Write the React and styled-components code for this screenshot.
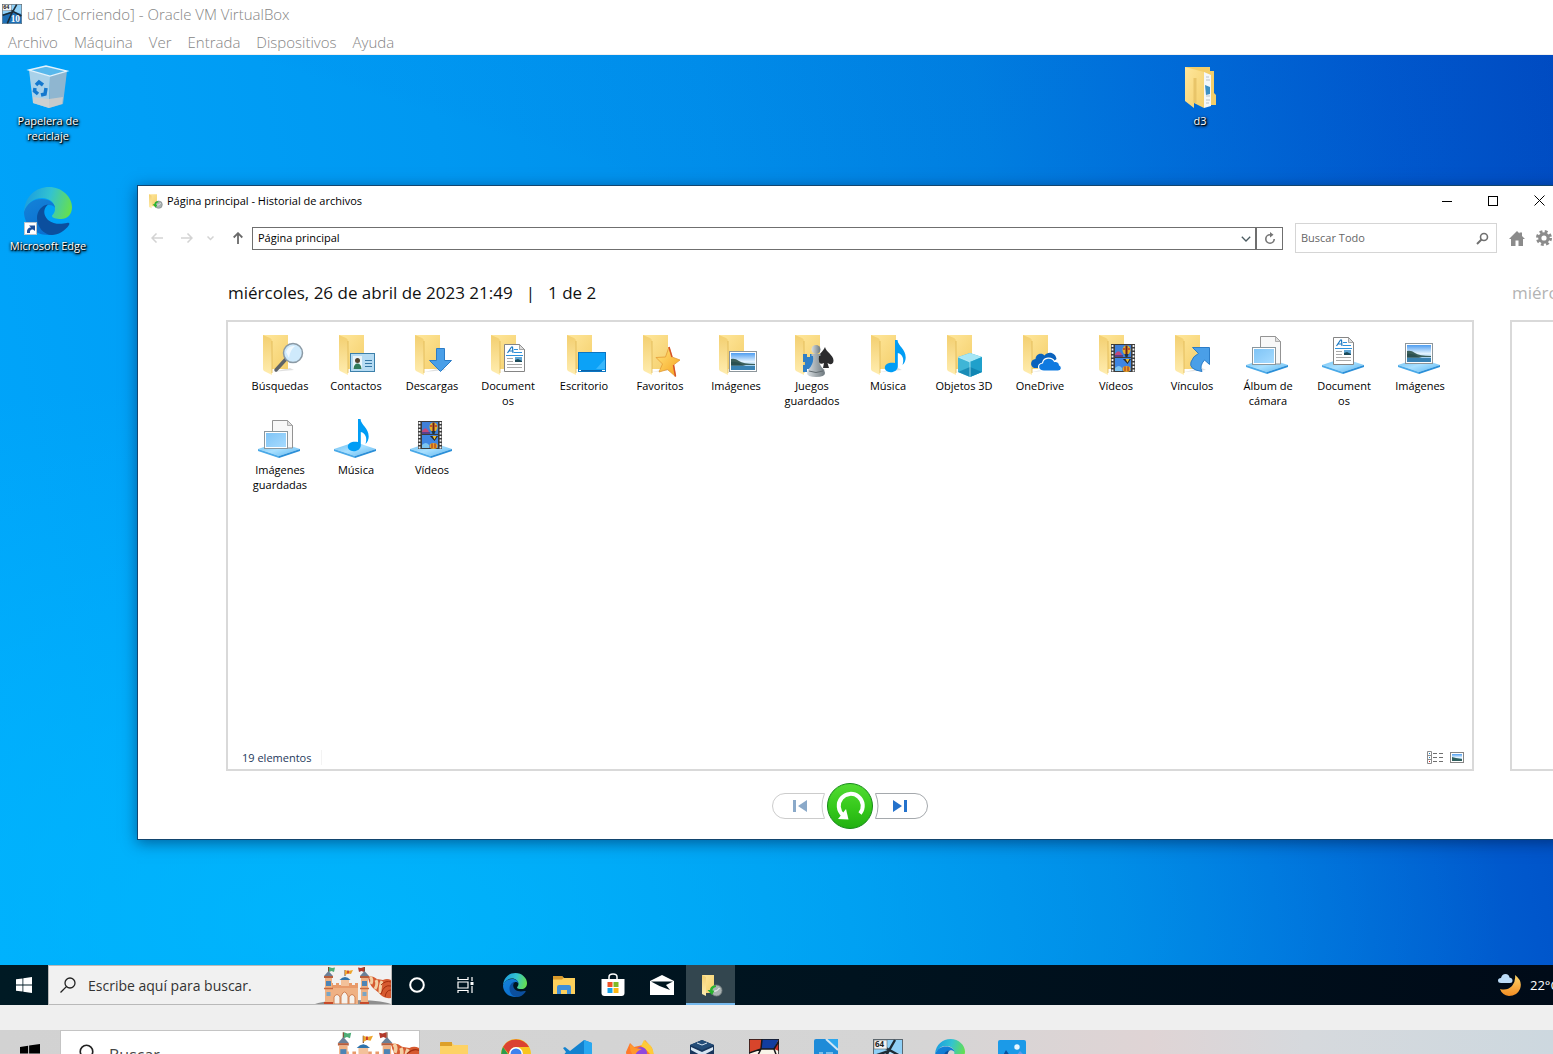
import styled, { createGlobalStyle, css } from "styled-components";

const GlobalStyle = createGlobalStyle`
  * { box-sizing: border-box; }
  body {
    margin: 0;
    overflow: hidden;
    background: #fff;
    font-family: "Open Sans", "Noto Sans", sans-serif;
  }
  button, input {
    font: inherit;
    color: inherit;
    border: 0;
    padding: 0;
    margin: 0;
    background: none;
    outline: none;
  }
  a { color: inherit; text-decoration: none; }
  svg { display: block; flex: none; }
`;

const Screen = styled.div`
  height: 100vh;
  display: flex;
  flex-direction: column;
  overflow: hidden;
`;

/* ---------- VirtualBox frame ---------- */

const HostTitle = styled.header`
  display: flex;
  align-items: center;
  gap: 5px;
  height: 30px;
  padding: 0 2px 2px;
  color: #858585;
  font-size: 15px;
  font-weight: 300;
`;

const HostMenu = styled.nav`
  display: flex;
  align-items: center;
  gap: 16px;
  height: 25px;
  padding: 0 8px;
  border-bottom: 1px solid #f0f0f0;
  color: #858585;
  font-size: 15px;
  font-weight: 300;
`;

const HostStatus = styled.div`
  height: 25px;
  flex: none;
  background: #efefef;
`;

const HostTaskbar = styled.footer`
  display: flex;
  height: 24px;
  flex: none;
  overflow: hidden;
  background: linear-gradient(90deg, #d2d2d2 0%, #d5d5d5 58%, #dfd4d5 74%, #d6d9dd 84%, #cdd8df 100%);
`;

const HostStart = styled.button`
  display: flex;
  flex: none;
  justify-content: center;
  width: 60px;
  padding-top: 14px;
`;

const HostSearch = styled.label`
  display: flex;
  flex: none;
  width: 360px;
  height: 48px;
  border: 1px solid #c4c4c4;
  background: #fff;
  padding-left: 13px;
`;

const HostSearchIcon = styled.span`
  padding-top: 13px;
`;

const HostInput = styled.input`
  flex: 1;
  min-width: 0;
  height: 48px;
  padding-left: 15px;
  font-size: 16px;
  color: #333;
  &::placeholder { color: #444; opacity: 1; }
`;

const HostApps = styled.div`
  display: flex;
  padding: 9px 0 0 3px;
`;

const HostApp = styled.button`
  display: flex;
  justify-content: center;
  align-items: flex-start;
  width: 62px;
`;

/* ---------- guest desktop ---------- */

const Desktop = styled.main`
  position: relative;
  flex: 1;
  min-height: 0;
  overflow: hidden;
  background:
    linear-gradient(197deg, rgba(0, 90, 210, 0.08) 0%, rgba(0, 120, 230, 0.04) 28%, transparent 29%),
    radial-gradient(ellipse 75% 60% at 22% 95%, rgba(0, 190, 255, 0.7), rgba(0, 180, 255, 0) 100%),
    linear-gradient(80deg, #00a6fb 0%, #0098f1 34%, #008eea 50%, #007fe0 66%, #0070da 75%, #0057cc 90%, #004ac0 100%);
`;

const Shortcut = styled.a`
  position: absolute;
  left: ${(p) => p.$left}px;
  top: ${(p) => p.$top}px;
  display: flex;
  flex-direction: column;
  align-items: center;
  gap: 1px;
  width: 96px;
  color: #fff;
  font-size: 11px;
  line-height: 15px;
  text-align: center;
  text-shadow: 1px 1px 1px #000, 0 1px 3px #000, 1px 1px 3px #000;
`;

const ShortcutText = styled.span`
  max-width: ${(p) => (p.$narrow ? 72 : 96)}px;
`;

const Window = styled.section`
  position: absolute;
  left: 137px;
  right: -10px;
  top: 130px;
  bottom: 125px;
  display: flex;
  flex-direction: column;
  border: 1px solid #12456f;
  background: #fff;
  color: #000;
  box-shadow: 0 3px 14px rgba(0, 20, 60, 0.5);
`;

const TitleBar = styled.div`
  display: flex;
  align-items: center;
  height: 29px;
  padding-left: 9px;
  font-size: 11px;
`;

const Caption = styled.div`
  flex: 1;
  padding-left: 4px;
`;

const CaptionButton = styled.button`
  display: grid;
  place-items: center;
  width: 46px;
  height: 29px;
`;

const Toolbar = styled.div`
  display: flex;
  align-items: center;
  height: 30px;
  margin-top: 8px;
  padding: 0 5px 0 4px;
  font-size: 11px;
`;

const NavButtons = styled.div`
  display: flex;
  flex: none;
  align-items: center;
  width: 110px;
`;

const IconButton = styled.button`
  display: grid;
  flex: none;
  place-items: center;
  width: ${(p) => p.$w}px;
  height: 23px;
`;

const UpButton = styled(IconButton)`
  margin-left: auto;
`;

const Address = styled.div`
  display: flex;
  flex: 1;
  height: 23px;
  border: 1px solid #6f6f6f;
`;

const AddressInput = styled.input`
  flex: 1;
  min-width: 0;
  padding: 0 0 1px 5px;
`;

const Refresh = styled.button`
  display: grid;
  place-items: center;
  width: 27px;
  border-left: 2px solid #6f6f6f;
`;

const SearchBox = styled.label`
  display: flex;
  align-items: center;
  width: 202px;
  height: 30px;
  margin: 0 6px 0 12px;
  padding: 0 7px 0 5px;
  border: 1px solid #d5d5d5;
`;

const SearchInput = styled.input`
  flex: 1;
  min-width: 0;
  padding-bottom: 1px;
  &::placeholder { color: #666; opacity: 1; }
`;

const Carousel = styled.div`
  display: flex;
  flex: 1;
  min-height: 0;
  gap: 36px;
  padding: 28px 88px 0;
`;

const Version = styled.article`
  display: flex;
  flex-direction: column;
  flex: 0 0 100%;
  min-width: 0;
`;

const VersionTitle = styled.h2`
  display: flex;
  gap: 13px;
  margin: 0 0 15px 2px;
  color: ${(p) => (p.$faded ? "#b3b3b3" : "#111")};
  font-size: 17px;
  font-weight: 400;
  line-height: 24px;
  white-space: nowrap;
`;

const Panel = styled.div`
  display: flex;
  flex-direction: column;
  flex: 1;
  min-height: 0;
  border: 2px solid #d9d9d9;
`;

const Items = styled.ul`
  display: grid;
  grid-template-columns: repeat(auto-fill, 76px);
  grid-auto-rows: 76px;
  row-gap: 8px;
  flex: 1;
  align-content: start;
  margin: 0;
  padding: 9px 10px 9px 14px;
  list-style: none;
`;

const Item = styled.li`
  display: flex;
  flex-direction: column;
  align-items: center;
  font-size: 11px;
  line-height: 15px;
  text-align: center;
`;

const ItemLabel = styled.span`
  width: 60px;
  margin-top: 1px;
  overflow-wrap: anywhere;
`;

const StatusRow = styled.div`
  display: flex;
  align-items: center;
  height: 24px;
  padding: 0 8px 0 14px;
  color: #1e395b;
  font-size: 11px;
`;

const Count = styled.span`
  margin-right: auto;
  padding-right: 10px;
  border-right: 1px solid #f3f3f3;
`;

const ViewButton = styled.button`
  margin-left: 7px;
`;

const Controls = styled.div`
  display: flex;
  justify-content: center;
  align-items: center;
  gap: 2px;
  padding: 12px 0 10px;
`;

/* ---------- guest taskbar ---------- */

const Taskbar = styled.footer`
  display: flex;
  height: 40px;
  flex: none;
  overflow: hidden;
  color: #fff;
  background: linear-gradient(90deg, #001a24, #00131f 55%, #000b18);
`;

const TaskButton = styled.button`
  display: grid;
  place-items: center;
  width: ${(p) => p.$w || 49}px;
  height: 40px;
  ${(p) =>
    p.$active &&
    css`
      background: #33464f;
      box-shadow: inset 0 -2px #76b9ed;
    `}
`;

const TaskSearch = styled.label`
  display: flex;
  align-items: center;
  width: 344px;
  border: 1px solid #b9b9b9;
  background: #f1f1f1;
  padding-left: 11px;
`;

const TaskInput = styled.input`
  flex: 1;
  min-width: 0;
  padding-left: 12px;
  font-size: 14px;
  color: #333;
  &::placeholder { color: #333; opacity: 1; }
`;

const Weather = styled.button`
  display: flex;
  align-items: center;
  gap: 8px;
  width: 55px;
  margin-left: auto;
  overflow: hidden;
  color: #fff;
  font-size: 13px;
  white-space: nowrap;
`;

/* ---------- drawings ---------- */

const Gradients = () => (
  <svg width="0" height="0" style={{ position: "absolute" }} aria-hidden="true">
    <defs>
      <linearGradient id="fold" x1="0" y1="0" x2="1" y2="1">
        <stop offset="0" stopColor="#ffe79c" />
        <stop offset="1" stopColor="#f4cf6c" />
      </linearGradient>
      <linearGradient id="flap" x1="0" y1="0" x2="0" y2="1">
        <stop offset="0" stopColor="#f3cf70" />
        <stop offset="1" stopColor="#ffedb0" />
      </linearGradient>
      <linearGradient id="sky" x1="0" y1="0" x2="0" y2="1">
        <stop offset="0" stopColor="#4e9df0" />
        <stop offset="0.5" stopColor="#e3f3ff" />
        <stop offset="1" stopColor="#5ea8dc" />
      </linearGradient>
      <linearGradient id="base" x1="0" y1="0" x2="1" y2="1">
        <stop offset="0" stopColor="#69bdf0" />
        <stop offset="0.5" stopColor="#a9e0ff" />
        <stop offset="1" stopColor="#5ab6f0" />
      </linearGradient>
      <linearGradient id="edgeTop" x1="0" y1="0.4" x2="1" y2="0.6">
        <stop offset="0" stopColor="#1a9de0" />
        <stop offset="0.5" stopColor="#33c3d0" />
        <stop offset="1" stopColor="#67e04c" />
      </linearGradient>
      <linearGradient id="edgeMid" x1="0" y1="0" x2="0.5" y2="1">
        <stop offset="0" stopColor="#1583d8" />
        <stop offset="1" stopColor="#0a6fd0" />
      </linearGradient>
      <linearGradient id="green" x1="0" y1="0" x2="0" y2="1">
        <stop offset="0" stopColor="#53dc33" />
        <stop offset="0.55" stopColor="#35c81b" />
        <stop offset="1" stopColor="#22b010" />
      </linearGradient>
      <linearGradient id="star" x1="0" y1="0" x2="1" y2="1">
        <stop offset="0" stopColor="#ffe680" />
        <stop offset="1" stopColor="#f7a21b" />
      </linearGradient>
      <linearGradient id="pawn" x1="0" y1="0" x2="1" y2="0">
        <stop offset="0" stopColor="#d9dfe2" />
        <stop offset="1" stopColor="#6c777d" />
      </linearGradient>
      <linearGradient id="moon" x1="0" y1="0" x2="0" y2="1">
        <stop offset="0" stopColor="#ffd76b" />
        <stop offset="1" stopColor="#f28c22" />
      </linearGradient>
      <linearGradient id="pane" x1="0" y1="0" x2="1" y2="1">
        <stop offset="0" stopColor="#7fc4f6" />
        <stop offset="1" stopColor="#a6dbff" />
      </linearGradient>
    </defs>
  </svg>
);

const FolderShape = () => (
  <>
    <path d="M16 41L38 39L34 37Z" fill="#000" opacity=".12" />
    <path d="M7 4H32V38H14Z" fill="url(#fold)" />
    <path d="M7 4L14 7Q16 8 16 10V44L8 40Q7 39 7 38Z" fill="url(#flap)" />
    <path d="M16 10V42" stroke="#e0b754" strokeWidth=".8" />
  </>
);

const Platform = () => (
  <>
    <path d="M2 34L23 27L44 34L23 41Z" fill="url(#base)" />
    <path d="M2 34L23 41V43L2 36Z" fill="#4aa9e8" />
    <path d="M44 34L23 41V43L44 36Z" fill="#2b8fd8" />
  </>
);

const NoteShape = () => (
  <path
    d="M31 9H33.500C34 15 41.700 18 41.700 26.500C41.700 29 40.500 32.500 38.500 34C40.500 28 38.500 23 33.800 22V35.500C33.800 39 30 41.500 26.500 41.300C23 41 20.700 39 20.800 36.500C21 33 25 31 31 32Z"
    fill="#009df5"
  />
);

const PhotoShape = () => (
  <>
    <rect x=".5" y=".5" width="27" height="20" fill="#fff" stroke="#8d969b" />
    <rect x="2" y="2" width="24" height="17" fill="url(#sky)" />
    <path d="M2 8Q6 7 10 10T26 13V14H2Z" fill="#3c5f5a" />
    <path d="M2 11Q8 10 14 14L20 16H2Z" fill="#234a4c" opacity=".7" />
    <path d="M2 15H26V19H2Z" fill="#3a83b4" />
  </>
);

const DocShape = () => (
  <>
    <path d="M.5 .5H15.500L20.500 5.500V27.500H.5Z" fill="#fff" stroke="#858585" />
    <path d="M15.500 .5V5.500H20.500Z" fill="#ddd" stroke="#858585" strokeWidth=".7" />
    <path d="M3.500 9L7.500 3H8.500L9 9M5 7H9" fill="none" stroke="#1b78c2" strokeWidth="1.200" />
    <path d="M10 5.500H14M10 8.500H18M2 11.500H19" stroke="#2f92dc" />
    <path d="M3 14.500H9M3 17.500H9M3 20.500H18M3 23.500H18" stroke="#a9a9a9" />
    <rect x="11" y="13" width="7" height="5" fill="#5fa5d4" />
    <path d="M11 16L14 15L18 17V18H11Z" fill="#1c4b5a" />
  </>
);

const FilmShape = () => (
  <>
    <rect width="24" height="28" fill="#3c3c3c" />
    <path d="M1.500 1V28M22.500 1V28" stroke="#f4f4f4" strokeWidth="1.800" strokeDasharray="2 1.500" />
    <rect x="4" y="1" width="16" height="12" fill="#3f80d8" />
    <rect x="4" y="14" width="16" height="13" fill="#3f86e2" />
    <path d="M4 10Q7 5 10 9L12 13H4Z" fill="#c0497d" />
    <path d="M4 11L12 11V13H4Z" fill="#5b3f8c" />
    <ellipse cx="15.500" cy="6" rx="4" ry="4.500" fill="#e3b22b" />
    <path d="M15.500 1.500V10.500" stroke="#6a1f1c" strokeWidth="2" />
    <path d="M12 5H14M17 5H19" stroke="#c3342a" strokeWidth="1.500" />
    <path d="M13.500 10H17.500L16.500 13H14.500Z" fill="#23343a" />
    <path d="M12 15H20L16.500 20Z" fill="#2b2723" />
    <path d="M14.500 15L16.500 18.500L18.500 15" fill="#f1c232" />
    <ellipse cx="15.500" cy="25" rx="4" ry="3" fill="#e5a329" />
    <path d="M4 24Q8 20 11 24V27H4Z" fill="#7cc4f0" />
    <path d="M14 22.500V27M17 22.500V27" stroke="#a5261c" />
  </>
);

const AlbumShape = () => (
  <>
    <path d="M16.500 5.500H31.500L36.500 10.500V33H16.500Z" fill="#f8f8f8" stroke="#939393" />
    <path d="M31.500 5.500V10.500H36.500Z" fill="#ddd" stroke="#939393" strokeWidth=".7" />
    <rect x="8.500" y="16.500" width="23" height="17" fill="#fff" stroke="#8a979e" />
    <rect x="10" y="18" width="20" height="14" fill="url(#pane)" />
  </>
);

const overlays = {
  search: (
    <>
      <path d="M30 28L20 39" stroke="#5f6468" strokeWidth="3.500" strokeLinecap="round" />
      <circle cx="37" cy="22" r="9.500" fill="#cfeafc" stroke="#8b9aa5" strokeWidth="1.500" />
      <path d="M30 21Q32 14 39 15Q34 19 33 27Z" fill="#fff" opacity=".7" />
    </>
  ),
  contact: (
    <>
      <rect x="18.500" y="22.500" width="24" height="18" fill="#b5dbf3" stroke="#3c80aa" />
      <rect x="21" y="25" width="9" height="13" fill="#e9f4fa" />
      <circle cx="25.500" cy="29.500" r="2.500" fill="#51432f" />
      <path d="M21.500 38Q22 32.500 25.500 32.500T29.500 38Z" fill="#2f7a5a" />
      <path d="M33 29.500H40M33 32.500H40M33 35.500H40" stroke="#3577a5" />
    </>
  ),
  download: <path d="M28.500 17.500H36.500V29.500H43.500L32.500 40.500L21.500 29.500H28.500Z" fill="#4a9fe8" stroke="#2b7cc7" />,
  doc: <g transform="translate(20 13)"><DocShape /></g>,
  screen: (
    <>
      <rect x="18.500" y="21.500" width="27" height="19" fill="#0ca2f7" stroke="#0a75c2" />
      <path d="M36 38L45 28V38Z" fill="#56c5ff" opacity=".6" />
      <path d="M19 39.500H45" stroke="#0a62a8" />
      <path d="M19 39.500H21M42 39.500H45" stroke="#fff" />
    </>
  ),
  star: (
    <>
      <path d="M33 16L36 26L44 29L37.500 34L39.500 45.500L31.500 38.500L23 41L26.500 33L20 26.500L29.500 26Z" fill="url(#star)" stroke="#e39a35" strokeWidth=".8" />
      <path d="M33 16L36 26M37.500 34L39.500 45.500" fill="none" stroke="#d6532a" strokeWidth="1.500" />
    </>
  ),
  photo: <g transform="translate(17 20)"><PhotoShape /></g>,
  games: (
    <>
      <path d="M15 23H19V26H22V23H26V41H22V38H19V41H15V34H17V31H15Z" fill="#2f7fc6" />
      <path d="M37 16C38 21 45.500 24 45.500 29.500C45.500 33.500 42 34 39.500 32L41 37H35L36 32C33 34 30 32 30 28C30 23 35 21 37 16Z" fill="#2c2c2e" />
      <circle cx="28" cy="18.500" r="4.500" fill="url(#pawn)" />
      <path d="M23.500 23H32.500V25H31Q30 31 33.500 36Q37 39 37 42Q37 46 28 46T19 42Q19 39 22.500 36Q26 31 25 25H23.500Z" fill="url(#pawn)" />
      <path d="M21 40Q28 43 35 40" fill="none" stroke="#616b70" />
    </>
  ),
  music: <NoteShape />,
  cube: (
    <>
      <path d="M30 22L42 26V41L30 46L18 41V26Z" fill="#3fb5d6" />
      <path d="M30 22L42 26L30 31L18 26Z" fill="#a5e6f5" />
      <path d="M30 31L42 26V41L30 46Z" fill="#1fa0cb" />
      <path d="M18 41L30 36L42 41L30 46Z" fill="#0c7ba8" opacity=".7" />
      <path d="M18 26L30 31V46" fill="none" stroke="#c8f2fb" strokeWidth=".7" />
    </>
  ),
  cloud: (
    <>
      <path d="M18 37C13.500 35 14.500 28.500 19.500 28C20 22.500 26 21.500 28.500 24.500C32 19.500 40 21.500 40.500 28L30 37Z" fill="#0a62bd" />
      <path d="M28 40C21 40 21 33 26.500 32C27.500 26 36 25.500 38.500 30.500C41.500 30 43.500 32 43.500 34C46.500 35.500 46 40 42 40Z" fill="#0f7ae0" stroke="#fff" strokeWidth="1.200" />
    </>
  ),
  film: <g transform="translate(19 13)"><FilmShape /></g>,
  link: <path d="M24.500 16.500H41.500V33.500L36.500 29Q31 35 34 40.500Q20.500 38.500 23 31Q25 25 30.500 22.500Z" fill="#4a9fe8" stroke="#2b7cc7" />,
};

const libraries = {
  album: <AlbumShape />,
  libDoc: <g transform="translate(13 6)"><DocShape /></g>,
  libPhoto: <g transform="translate(9 12)"><PhotoShape /></g>,
  libMusic: <g transform="translate(-5 -5)"><NoteShape /></g>,
  libFilm: <g transform="translate(10 6)"><FilmShape /></g>,
};

const ItemIcon = ({ kind }) => (
  <svg width="48" height="46" viewBox="0 0 48 46" aria-hidden="true">
    {overlays[kind] ? <FolderShape /> : <Platform />}
    {overlays[kind] || libraries[kind]}
  </svg>
);

const EdgeLogo = ({ size }) => (
  <svg width={size} height={size} viewBox="0 0 48 48" aria-hidden="true">
    <path d="M0 25C1 9 12 0 25 0C38 0 48 10 48 20C48 28 43 32 37 32C32 32 28 31 28 29C28 28 31 26 31 22C31 16 26 11 18 11C9 11 3 17 0 25Z" fill="url(#edgeTop)" />
    <path d="M0 25C3 16 9 12 18 12C25 12 31 16 31 21C30 19 28 18 25 18C18 18 14 26 15 32C16 42 24 48 32 46.500C28 48 26 48 24 48C10 48 0 37 0 25Z" fill="url(#edgeMid)" />
    <path d="M13 31C13 24 18 18 24 17.500C19 22 19 28 24 33C30 38 38 37 43 36C45 35.500 46 36 45 38C41 44 34 48 28 48C20 48 13 40 13 31Z" fill="#0b4f9e" />
  </svg>
);

const HistoryIcon = ({ size }) => (
  <svg width={size} height={size} viewBox="0 0 24 24" aria-hidden="true">
    <path d="M3 2H15V20H7Z" fill="url(#fold)" />
    <path d="M3 2L7 4V23L3 21Z" fill="url(#flap)" />
    <circle cx="17.500" cy="17.500" r="5.500" fill="#a9b2b2" stroke="#777f80" strokeWidth=".8" />
    <path d="M20.500 15L17.500 18H14.500" fill="none" stroke="#fff" />
    <path d="M17 12.500Q11.500 12 11 17H8.500L13 22L15.500 17.500H13.500Q13.500 14.500 17 14Z" fill="#29b32f" />
  </svg>
);

const RecycleBin = () => (
  <svg width="48" height="47" viewBox="0 0 48 47" aria-hidden="true">
    <path d="M5 5L26 11L25 43L9 38Z" fill="#c5d9e6" opacity=".85" />
    <path d="M43 6L26 11L25 43L39 39Z" fill="#9fb8cb" opacity=".9" />
    <path d="M9 32L25 34L39 32L38 39L25 43L9 38Z" fill="#d4cfc9" opacity=".8" />
    <path d="M5 5L22 1L43 6L26 11Z" fill="#58b8ec" stroke="#e3f2fb" strokeWidth="1.300" />
    <g fill="none" stroke="#1278ce" strokeWidth="3.500">
      <path d="M12 20L15 17L19 20" />
      <path d="M22 23L21 29L17 30" />
      <path d="M14 29L10.500 26L11 23" />
    </g>
  </svg>
);

const DesktopFolder = () => (
  <svg width="34" height="46" viewBox="0 0 34 46" aria-hidden="true">
    <path d="M2 1H27V5H31V27L33 29V39H20L2 34Z" fill="#f3ce69" />
    <path d="M21 6L28 9V40L21 42Z" fill="#f4f7f9" />
    <path d="M23 11H26M23 14H27M23 30H27M23 34H27M23 37H26" stroke="#b9c3ca" />
    <path d="M22 19L27 21V28L23 29Z" fill="#3d8fc4" />
    <path d="M2 1L21 6V42L11 37V42L2 35Z" fill="url(#fold)" />
    <path d="M12 12V37" stroke="#e9c569" strokeWidth="3" />
  </svg>
);

const VmIcon = ({ size, ten }) => (
  <svg width={size} height={size} viewBox="0 0 30 30" aria-hidden="true">
    <rect x=".5" y=".5" width="29" height="29" fill="#8fd0f7" stroke="#5a6770" />
    <path d="M1 16L16 11L29 15V29H1Z" fill={ten ? "#1e6fb5" : "#b7e1fa"} />
    <path d="M22 1L14 15L8 29M11 8L29 18M1 17L16 12" fill="none" stroke="#1d2c36" strokeWidth="2.400" />
    <rect x="1" y="1" width="13" height="9" fill="#f2f2f2" stroke="#666" strokeWidth=".6" />
    <text x="2" y="8" fontSize="8" fontWeight="700" fontFamily="Open Sans" fill="#222">64</text>
    {ten && <text x="13" y="27" fontSize="14" fontWeight="700" fontFamily="Liberation Serif" fill="#fff">10</text>}
  </svg>
);

const WindowsLogo = ({ size, color }) => (
  <svg width={size} height={size} viewBox="0 0 16 16" fill={color} aria-hidden="true">
    <path d="M0 2.300L6.500 1.400V7.600H0ZM7.300 1.200L16 0V7.600H7.300ZM0 8.400H6.500V14.600L0 13.700ZM7.300 8.400H16V16L7.300 14.800Z" />
  </svg>
);

const Lens = ({ size, color, width = 1.3 }) => (
  <svg width={size} height={size} viewBox="0 0 16 16" fill="none" stroke={color} strokeWidth={width} aria-hidden="true">
    <circle cx="10" cy="6" r="5" />
    <path d="M6.400 9.600L.5 15.500" />
  </svg>
);

const Tower = ({ x, flag }) => (
  <g transform={`translate(${x} 0)`}>
    <path d="M4.500 8V1" stroke="#7b4a2d" />
    <path d="M5 1L8 2L11 1.500L10 6L7.500 5L5 6Z" fill={flag} />
    <path d="M0 10L4.500 5L9 10Z" fill="#6b7f97" />
    <rect y="10" width="9" height="2" fill="#b55d3d" />
    <rect x="1" y="12" width="7" height="27" fill="#f0b183" />
    <rect x="2" y="15" width="5" height="5" fill="#4d84b5" />
    <path d="M0 22.500H9" stroke="#c9683f" strokeWidth="1.500" />
    <rect x="2.500" y="26" width="4" height="4" fill="#7aa5c4" />
    <path d="M0 36H9V39H0Z" fill="#c64a2a" />
  </g>
);

const Castle = ({ width = 76 }) => (
  <svg width={width} height={width / 2} viewBox="0 0 76 38" aria-hidden="true">
    <path d="M0 38Q12 34 38 34T76 38Z" fill="#8e8e8e" />
    <path d="M14 19H43V38H14Z" fill="#efb184" />
    <path d="M16 20V17H18V19H21V17H24V19H34V17H37V19H40V17H43V22H16Z" fill="#e89a6a" />
    <path d="M19 38V31Q22 26 25 31V38ZM34 38V31Q37 26 40 31V38Z" fill="#f5f1ec" stroke="#d08053" />
    <path d="M26 38V30Q29.500 22 33 30V38Z" fill="#f5f1ec" stroke="#d08053" />
    <path d="M26 20V14H34V20Z" fill="#f3c19a" />
    <path d="M24.500 14Q30 8 35.500 14Z" fill="#2f74ac" />
    <path d="M30 10V4" stroke="#7b4a2d" />
    <path d="M30 4L33 5L38 4L36 8L33 7.500L30 9Z" fill="#eda52c" />
    <path d="M33 4.500V7.500" stroke="#c9362a" strokeWidth="1.500" />
    <Tower x="9" flag="#4fae79" />
    <g transform="translate(90 0) scale(-1 1)"><Tower x="36" flag="#b23a2c" /></g>
    <path d="M53 11Q57 9 62 13L68 14Q72 12 76 14V32Q68 33 64 27L58 22Q54 18 53 11Z" fill="#d65a30" />
    <path d="M55 11Q58 13 56 18M61 14Q63 18 60 23M67 15Q65 19 65 27" fill="none" stroke="#f3cfa4" strokeWidth="3" />
    <path d="M66 19Q71 14 76 16M66 28Q69 18 76 20M70 31Q71 24 76 24" fill="none" stroke="#a5300f" />
  </svg>
);

const hostApps = [
  ["Explorador", <>
    <path d="M1 4Q1 3 2 3H12L15 6H29V30H1Z" fill="#fdd265" />
    <path d="M1 4Q1 3 2 3H13V7H1Z" fill="#dda029" />
  </>],
  ["Chrome", <>
    <circle cx="15" cy="15" r="15" fill="#f9c51f" />
    <path d="M2 8A15 15 0 0 1 28 8H15Q9 9 8 15Z" fill="#db4231" />
    <path d="M2 8A15 15 0 0 0 13 30L15 22L7 15Z" fill="#2a9d50" />
    <circle cx="15" cy="15" r="7" fill="#fff" />
    <circle cx="15" cy="15" r="5.500" fill="#3f82ee" />
  </>],
  ["Visual Studio Code", <>
    <path d="M21 1L29 4V30L6 15L2 19L0 17L3 13L0 9L2 8L7 12Z" fill="#1382cf" />
    <path d="M21 1L29 4V30L21 24Z" fill="#28a8f1" />
  </>],
  ["Firefox", <>
    <path d="M1 13L5 4L9 8L18 6L20 1L27 9L29 18Q25 30 14 30T1 13Z" fill="#ff7a2a" />
    <path d="M16 7L19 1L26 7Q30 13 28 20Q24 12 16 7Z" fill="#ffcb39" />
    <circle cx="16" cy="14" r="6" fill="#9048df" />
    <path d="M5 5L10 9L17 10Q11 12 10 17Q4 14 5 5Z" fill="#ff982d" />
  </>],
  ["VirtualBox", <>
    <path d="M15 1L27 6V25L15 30L3 25V6Z" fill="#18365c" />
    <path d="M15 1L27 6L15 11L3 6Z" fill="#244d78" />
    <path d="M4 8L15 13L26 8V11L15 17L4 11Z" fill="#d6e5f2" />
    <path d="M10 4L15 6L20 4" fill="none" stroke="#d6e5f2" />
  </>],
  ["Mosaico", <>
    <rect width="30" height="30" fill="#f8f4e8" />
    <path d="M0 0H13L12 10L0 14Z" fill="#d8452b" />
    <path d="M13 0H30L25 10L12 10Z" fill="#123d9f" />
    <path d="M30 0L25 10L30 12Z" fill="#c73025" />
    <path d="M0 0H30V30H0ZM13 0L12 10L0 14M12 10L25 10L30 2M12 10L8 18M25 10L28 18" fill="none" stroke="#18181b" strokeWidth="1.500" />
  </>],
  ["Documentos", <>
    <path d="M5 0H27V30H3V2Q3 0 5 0Z" fill="#1e8bd8" />
    <path d="M16 0H27V11Z" fill="#2da8ee" />
    <path d="M15 0L27 11" stroke="#cfe7f7" strokeWidth="2" />
    <path d="M8 13H12V17H8ZM15 13H22V17H15Z" fill="#7ac0ec" />
  </>],
  ["Máquina ud7", <VmIcon key="vm" size={30} />],
  ["Edge", <EdgeLogo key="edge" size={30} />],
  ["Fotos", <>
    <rect x="1" y="1" width="28" height="28" rx="2" fill="#1b9ae8" />
    <circle cx="20" cy="8" r="2.700" fill="#e9f7ff" />
    <path d="M2 24L9 11L18 24Z" fill="#0b4f9c" />
    <path d="M15 22L23 12L29 18V28H10Z" fill="#5f9df0" />
  </>],
];

const items = [
  ["Búsquedas", "search"],
  ["Contactos", "contact"],
  ["Descargas", "download"],
  ["Documentos", "doc"],
  ["Escritorio", "screen"],
  ["Favoritos", "star"],
  ["Imágenes", "photo"],
  ["Juegos guardados", "games"],
  ["Música", "music"],
  ["Objetos 3D", "cube"],
  ["OneDrive", "cloud"],
  ["Vídeos", "film"],
  ["Vínculos", "link"],
  ["Álbum de cámara", "album"],
  ["Documentos", "libDoc"],
  ["Imágenes", "libPhoto"],
  ["Imágenes guardadas", "album"],
  ["Música", "libMusic"],
  ["Vídeos", "libFilm"],
];

const menu = ["Archivo", "Máquina", "Ver", "Entrada", "Dispositivos", "Ayuda"];

function FileHistory() {
  return (
    <Window aria-label="Historial de archivos">
      <TitleBar>
        <HistoryIcon size={16} />
        <Caption>Página principal - Historial de archivos</Caption>
        <CaptionButton aria-label="Minimizar">
          <svg width="10" height="10"><path d="M0 5.500H10" stroke="#000" /></svg>
        </CaptionButton>
        <CaptionButton aria-label="Maximizar">
          <svg width="10" height="10"><rect x=".5" y=".5" width="9" height="9" fill="none" stroke="#000" /></svg>
        </CaptionButton>
        <CaptionButton aria-label="Cerrar">
          <svg width="11" height="11"><path d="M.5 .5L10.500 10.500M10.500 .5L.5 10.500" stroke="#000" /></svg>
        </CaptionButton>
      </TitleBar>

      <Toolbar>
        <NavButtons>
          <IconButton $w={30} aria-label="Atrás">
            <svg width="12" height="10" fill="none" stroke="#d3d3d3" strokeWidth="1.500"><path d="M12 5H1M5.500 .5L1 5L5.500 9.500" /></svg>
          </IconButton>
          <IconButton $w={30} aria-label="Adelante">
            <svg width="12" height="10" fill="none" stroke="#d3d3d3" strokeWidth="1.500"><path d="M0 5H11M6.500 .5L11 5L6.500 9.500" /></svg>
          </IconButton>
          <IconButton $w={16} aria-label="Recientes">
            <svg width="7" height="5" fill="none" stroke="#d3d3d3" strokeWidth="1.500"><path d="M.5 .5L3.500 3.500L6.500 .5" /></svg>
          </IconButton>
          <UpButton $w={28} aria-label="Subir">
            <svg width="10" height="12" fill="none" stroke="#6a6a6a" strokeWidth="1.800"><path d="M5 12V1M.7 5.500L5 1.200L9.300 5.500" /></svg>
          </UpButton>
        </NavButtons>
        <Address>
          <AddressInput aria-label="Dirección" defaultValue="Página principal" />
          <IconButton $w={18} aria-label="Ubicaciones anteriores">
            <svg width="10" height="6" fill="none" stroke="#4a5a60" strokeWidth="1.300"><path d="M.8 .8L5 5L9.200 .8" /></svg>
          </IconButton>
          <Refresh aria-label="Actualizar">
            <svg width="12" height="12" fill="none" stroke="#757575" strokeWidth="1.600">
              <path d="M10.200 7A4.200 4.200 0 1 1 6 2.800" />
              <path d="M6 0L9.500 2.800L6 5.600Z" fill="#757575" stroke="none" />
            </svg>
          </Refresh>
        </Address>
        <SearchBox>
          <SearchInput aria-label="Buscar Todo" placeholder="Buscar Todo" />
          <svg width="13" height="13" viewBox="0 0 13 13" fill="none" stroke="#707070" strokeWidth="1.600"><circle cx="8" cy="5" r="3.500" /><path d="M5.500 7.500L1 12" strokeWidth="2" /></svg>
        </SearchBox>
        <IconButton $w={27} aria-label="Inicio">
          <svg width="16" height="15" fill="#8b8b8b"><path d="M8 0L10.500 2.500V1.500H13V5L16 8H14V15H9.500V9.500H6.500V15H2V8H0Z" /></svg>
        </IconButton>
        <IconButton $w={27} aria-label="Opciones">
          <svg width="16" height="16" viewBox="0 0 16 16" fill="none" stroke="#8b8b8b">
            <circle cx="8" cy="8" r="4.200" strokeWidth="3.200" />
            <circle cx="8" cy="8" r="6.500" strokeWidth="3" strokeDasharray="2.800 2.300" />
          </svg>
        </IconButton>
      </Toolbar>

      <Carousel>
        <Version>
          <VersionTitle>
            <span>miércoles, 26 de abril de 2023 21:49</span>
            <span>|</span>
            <span>1 de 2</span>
          </VersionTitle>
          <Panel>
            <Items>
              {items.map(([label, kind], i) => (
                <Item key={i}>
                  <ItemIcon kind={kind} />
                  <ItemLabel>{label}</ItemLabel>
                </Item>
              ))}
            </Items>
            <StatusRow>
              <Count>19 elementos</Count>
              <ViewButton aria-label="Detalles">
                <svg width="16" height="13" fill="none" stroke="#8c8c8c">
                  <path d="M.5 .5H4.500V12.500H.5ZM.5 4.500H4.500M.5 8.500H4.500" />
                  <path d="M6 2.500H10M12 2.500H16M6 6.500H10M12 6.500H16M6 10.500H10M12 10.500H16" stroke="#6f6f6f" />
                  <path d="M2 10.500H3" stroke="#c22" />
                  <path d="M2 2.500H3M2 6.500H3" stroke="#28c" />
                </svg>
              </ViewButton>
              <ViewButton aria-label="Iconos grandes">
                <svg width="14" height="11">
                  <rect x=".5" y=".5" width="13" height="10" fill="#fff" stroke="#858585" />
                  <rect x="2" y="2" width="10" height="7" fill="url(#sky)" />
                  <path d="M2 5L6 6L12 7V9H2Z" fill="#30605f" />
                </svg>
              </ViewButton>
            </StatusRow>
          </Panel>
        </Version>
        <Version>
          <VersionTitle $faded>
            <span>miércoles, 26 de abril de 2023 21:45</span>
          </VersionTitle>
          <Panel />
        </Version>
      </Carousel>

      <Controls>
        <button aria-label="Versión anterior">
          <svg width="53" height="26" fill="none" stroke="#ccc">
            <path d="M52.500 .5H13A12.500 12.500 0 0 0 13 25.500H52.500Q47.500 13 52.500 .5Z" />
            <path d="M21 7H24V19H21ZM35 7V19L26 13Z" fill="#8aa9c9" stroke="none" />
          </svg>
        </button>
        <button aria-label="Restaurar">
          <svg width="46" height="46">
            <circle cx="23" cy="23" r="22.500" fill="url(#green)" stroke="#178a1a" />
            <path d="M33 30.500A12 12 0 1 0 16 32" fill="none" stroke="#fff" strokeWidth="4" />
            <path d="M11 36L19 26L21.500 36.500Z" fill="#fff" />
          </svg>
        </button>
        <button aria-label="Versión siguiente">
          <svg width="53" height="26" fill="none" stroke="#a5a9ad">
            <path d="M.5 .5H40A12.500 12.500 0 0 1 40 25.500H.5Q5.500 13 .5 .5Z" />
            <path d="M32 7H29V19H32ZM18 7V19L27 13Z" fill="#2472cc" stroke="none" />
          </svg>
        </button>
      </Controls>
    </Window>
  );
}

export default function App() {
  return (
    <Screen>
      <GlobalStyle />
      <Gradients />
      <HostTitle>
        <VmIcon size={20} ten />
        <span>ud7 [Corriendo] - Oracle VM VirtualBox</span>
      </HostTitle>
      <HostMenu>
        {menu.map((m) => (
          <a key={m} href="#menu">{m}</a>
        ))}
      </HostMenu>

      <Desktop>
        <Shortcut href="#papelera" $left={0} $top={10}>
          <RecycleBin />
          <ShortcutText $narrow>Papelera de reciclaje</ShortcutText>
        </Shortcut>
        <Shortcut href="#edge" $left={0} $top={132}>
          <svg width="50" height="50" viewBox="0 0 50 50">
            <g transform="translate(1 0)"><EdgeLogo size={48} /></g>
            <rect x="1.500" y="35.500" width="12" height="12" fill="#fff" stroke="#b8c4cc" />
            <path d="M4 46Q3.500 40.500 8 40.500L6 38.500H12V44L10 42.500Q6.500 42 7 46Z" fill="#1d4f9c" />
          </svg>
          <ShortcutText>Microsoft Edge</ShortcutText>
        </Shortcut>
        <Shortcut href="#d3" $left={1152} $top={11}>
          <DesktopFolder />
          <ShortcutText>d3</ShortcutText>
        </Shortcut>
        <FileHistory />
      </Desktop>

      <Taskbar>
        <TaskButton $w={48} aria-label="Inicio"><WindowsLogo size={16} color="#fff" /></TaskButton>
        <TaskSearch>
          <Lens size={16} color="#222" />
          <TaskInput aria-label="Buscar" placeholder="Escribe aquí para buscar." />
          <Castle />
        </TaskSearch>
        <TaskButton aria-label="Cortana">
          <svg width="16" height="16"><circle cx="8" cy="8" r="6.800" fill="none" stroke="#fff" strokeWidth="2" /></svg>
        </TaskButton>
        <TaskButton aria-label="Vista de tareas">
          <svg width="17" height="16" fill="none" stroke="#fff" strokeWidth="1.200">
            <path d="M1 0V2.500H11V0M1 16V13.500H11V16M1 5H11V11H1ZM15 0V4M15 9V16" />
            <path d="M13.500 5H16.500V8H13.500Z" fill="#fff" stroke="none" />
          </svg>
        </TaskButton>
        <TaskButton aria-label="Microsoft Edge"><EdgeLogo size={24} /></TaskButton>
        <TaskButton aria-label="Explorador de archivos">
          <svg width="22" height="18">
            <path d="M0 1Q0 0 1 0H9L11 2H22V18H0Z" fill="#fdd05b" />
            <path d="M0 0H9L10.500 2L9 3.500H0Z" fill="#d99a2b" />
            <path d="M4 18V11Q4 9 6 9H16Q18 9 18 11V18H14V14H8V18Z" fill="#3f8fd8" />
          </svg>
        </TaskButton>
        <TaskButton aria-label="Microsoft Store">
          <svg width="24" height="24">
            <path d="M8 7V4Q8 1 12 1T16 4V7" fill="none" stroke="#fff" strokeWidth="1.500" />
            <path d="M.5 6H23.500V20Q23.500 23 20.500 23H3.500Q.5 23 .5 20Z" fill="#fff" />
            <path d="M6.500 9H11.500V14H6.500Z" fill="#f05125" />
            <path d="M12.500 9H17.500V14H12.500Z" fill="#7fb927" />
            <path d="M6.500 15H11.500V20H6.500Z" fill="#16a2ea" />
            <path d="M12.500 15H17.500V20H12.500Z" fill="#fcb813" />
          </svg>
        </TaskButton>
        <TaskButton aria-label="Correo">
          <svg width="24" height="20">
            <path d="M0 6L12 0L24 6V20H0Z" fill="#fff" />
            <path d="M1 6.500H23L16 10L20 15L9.500 11Z" fill="#00161f" />
          </svg>
        </TaskButton>
        <TaskButton $active aria-label="Historial de archivos"><HistoryIcon size={24} /></TaskButton>
        <Weather>
          <svg width="24" height="24">
            <path d="M17 2Q25 8 22 16Q19 23 11 23Q4 22 2 16Q9 18 14 13Q18 8 17 2Z" fill="url(#moon)" />
            <path d="M3 10Q0 10 0 7.500Q0 5 3 5Q4 1 7.500 1Q11 1 11.500 4.500Q14.500 5 14.500 7.500Q14.500 10 12 10Z" fill="#bcdcf8" />
          </svg>
          22°C
        </Weather>
      </Taskbar>

      <HostStatus />

      <HostTaskbar>
        <HostStart aria-label="Inicio del anfitrión"><WindowsLogo size={20} color="#000" /></HostStart>
        <HostSearch>
          <HostSearchIcon><Lens size={20} color="#222" /></HostSearchIcon>
          <HostInput aria-label="Buscar en el anfitrión" placeholder="Buscar" />
          <Castle width={92} />
        </HostSearch>
        <HostApps>
          {hostApps.map(([name, art]) => (
            <HostApp key={name} aria-label={name}>
              <svg width="30" height="30" viewBox="0 0 30 30">{art}</svg>
            </HostApp>
          ))}
        </HostApps>
      </HostTaskbar>
    </Screen>
  );
}
